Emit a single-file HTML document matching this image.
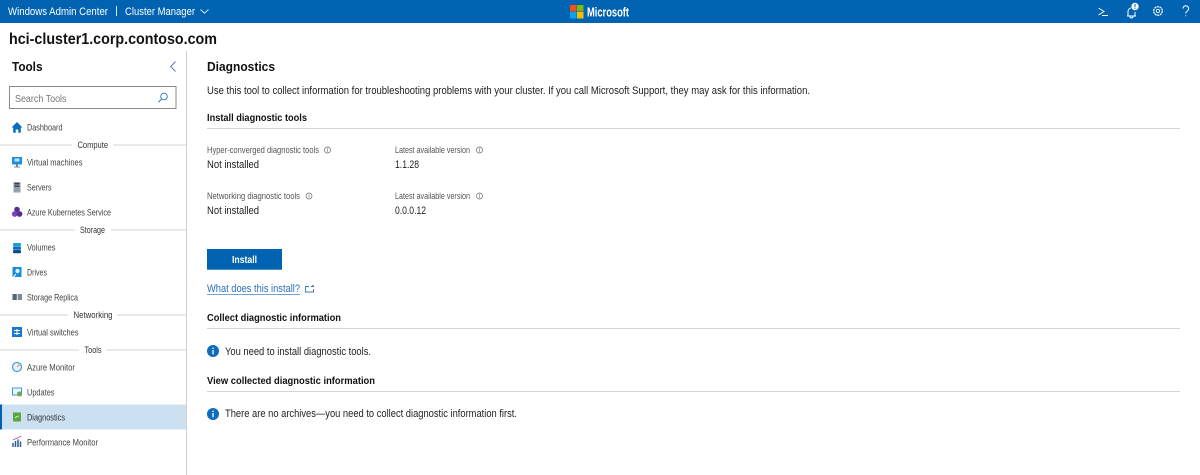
<!DOCTYPE html>
<html lang="en"><head><meta charset="utf-8"><title>Diagnostics</title>
<style>
html,body{margin:0;padding:0;background:#fff;width:1200px;height:475px;overflow:hidden}
svg{display:block}
text{font-family:"Liberation Sans",sans-serif;fill:#222;font-size:9.5px}
.n{fill:#444;font-size:9.5px}
.s{fill:#555;font-size:9.2px}
.h{font-weight:bold;font-size:10.5px;fill:#111}
.b{font-size:10.6px;fill:#222}
.w{fill:#fff;font-size:11px}
.g{fill:#333;font-size:9.2px}
</style></head><body>
<svg width="1200" height="475" viewBox="0 0 1200 475" xmlns="http://www.w3.org/2000/svg">
<rect width="1200" height="475" fill="#fff"/>
<!-- Header -->
<rect width="1200" height="23" fill="#0063b1"/>
<text class="w" x="8" y="15" textLength="100" lengthAdjust="spacingAndGlyphs">Windows Admin Center</text>
<rect x="116" y="6" width="1" height="10" fill="#dce9f5"/>
<text class="w" x="125" y="15" textLength="70" lengthAdjust="spacingAndGlyphs">Cluster Manager</text>
<path d="M200.500 9.500l4 3.700 4-3.700" fill="none" stroke="#dce9f5" stroke-width="1"/>
<rect x="570" y="5" width="6.500" height="6.500" fill="#f25022"/><rect x="577" y="5" width="6.500" height="6.500" fill="#7fba00"/>
<rect x="570" y="12" width="6.500" height="6.500" fill="#00a4ef"/><rect x="577" y="12" width="6.500" height="6.500" fill="#ffb900"/>
<text x="587" y="16.500" style="fill:#fff;font-size:13px;font-weight:bold" textLength="42" lengthAdjust="spacingAndGlyphs">Microsoft</text>
<path d="M1098.500 8l5.500 3.500-5.500 3.500M1102 15.500h6" fill="none" stroke="#fff" stroke-width="1"/>
<path d="M1128 16v-4.500a3.500 3.500 0 0 1 3-3.500M1135 12v4M1127 16h9M1130 16.500a1.500 1.500 0 0 0 3 0" fill="none" stroke="#fff" stroke-width="1"/>
<circle cx="1135" cy="6.500" r="3.700" fill="#fff"/><rect x="1134.500" y="4" width="1" height="3.200" fill="#0063b1"/><rect x="1134.500" y="7.800" width="1" height="1" fill="#0063b1"/>
<circle cx="1158" cy="11" r="4.300" fill="none" stroke="#fff" stroke-width="1.300" stroke-dasharray="2 .7"/><circle cx="1158" cy="11" r="1.700" fill="none" stroke="#fff" stroke-width=".9"/>
<path d="M1183 8.500a2.800 2.800 0 1 1 4.200 2.500c-1 .6-1.400 1-1.400 2.500" fill="none" stroke="#fff" stroke-width="1"/><rect x="1185.300" y="15.300" width="1" height="1" fill="#fff"/>
<!-- Title -->
<text x="9" y="44" style="font-size:15.500px;font-weight:bold;fill:#111" textLength="208" lengthAdjust="spacingAndGlyphs">hci-cluster1.corp.contoso.com</text>
<!-- Sidebar -->
<rect x="186" y="51" width="1" height="424" fill="#d0d0d0"/>
<text x="12" y="71" style="font-size:12.500px;font-weight:bold;fill:#111" textLength="30.500" lengthAdjust="spacingAndGlyphs">Tools</text>
<path d="M175.500 61.500l-4.800 5 4.800 5" fill="none" stroke="#5a76c0" stroke-width="1"/>
<rect x="9.500" y="86.500" width="166.500" height="22" fill="#fff" stroke="#8a8a8a"/>
<text x="15" y="102" style="font-size:10px;fill:#777" textLength="51.500" lengthAdjust="spacingAndGlyphs">Search Tools</text>
<circle cx="164" cy="96.500" r="3.300" fill="none" stroke="#3f7fc1" stroke-width="1"/><path d="M161.500 99l-3 3.200" stroke="#3f7fc1" stroke-width="1.100"/>
<path d="M11.500 127.500l5.500-5.500 5.500 5.500h-1.700v5.300h-2.500v-3.300h-2.600v3.300h-2.500v-5.300z" fill="#0f6cbd"/>
<text class="n" x="27" y="130.500" textLength="35.500" lengthAdjust="spacingAndGlyphs">Dashboard</text>
<rect x="0" y="144.500" width="72" height="1" fill="#d6d6d6"/><rect x="113" y="144.500" width="73" height="1" fill="#d6d6d6"/>
<text class="g" x="77.500" y="148" textLength="30.500" lengthAdjust="spacingAndGlyphs">Compute</text>
<rect x="12" y="157" width="10" height="7.500" fill="#1e8fe0"/><rect x="14.500" y="158.500" width="5" height="3" fill="#bfe3fa"/><rect x="16" y="164.500" width="2" height="2" fill="#7a8a99"/><rect x="14" y="166.500" width="6" height="1" fill="#7a8a99"/>
<text class="n" x="27" y="165.500" textLength="55.500" lengthAdjust="spacingAndGlyphs">Virtual machines</text>
<rect x="13.500" y="182" width="7" height="10.500" fill="#9a9fa5"/><rect x="14.500" y="183" width="5" height="1.400" fill="#28425e"/><rect x="14.500" y="185.500" width="5" height="1.400" fill="#28425e"/>
<text class="n" x="27" y="190.500" textLength="24.500" lengthAdjust="spacingAndGlyphs">Servers</text>
<circle cx="17" cy="209.500" r="2.800" fill="#5c2d91"/><circle cx="14.700" cy="214" r="2.900" fill="#7a45c0"/><circle cx="19.500" cy="214" r="2.900" fill="#5c2d91"/>
<text class="n" x="27" y="215.500" textLength="84" lengthAdjust="spacingAndGlyphs">Azure Kubernetes Service</text>
<rect x="0" y="229.500" width="75" height="1" fill="#d6d6d6"/><rect x="111" y="229.500" width="75" height="1" fill="#d6d6d6"/>
<text class="g" x="80" y="233" textLength="25" lengthAdjust="spacingAndGlyphs">Storage</text>
<rect x="13" y="243" width="8" height="3.200" rx="1" fill="#1b9de2"/><rect x="13" y="246.500" width="8" height="3.200" rx="1" fill="#0f6cbd"/><rect x="13" y="250" width="8" height="3.200" rx="1" fill="#0a4f8f"/>
<text class="n" x="27" y="250.500" textLength="28.500" lengthAdjust="spacingAndGlyphs">Volumes</text>
<rect x="12.500" y="267" width="9" height="10" fill="#1b8ad8"/><circle cx="17.500" cy="271" r="2.200" fill="#d6eefc"/><path d="M13.500 277l2.500-3" stroke="#fff" stroke-width="1"/>
<text class="n" x="27" y="275.500" textLength="20" lengthAdjust="spacingAndGlyphs">Drives</text>
<rect x="12.500" y="294" width="4.300" height="6" fill="#55657a"/><rect x="17.700" y="294" width="4.300" height="6" fill="#7d8a9a"/>
<text class="n" x="27" y="300.500" textLength="51" lengthAdjust="spacingAndGlyphs">Storage Replica</text>
<rect x="0" y="314.500" width="68" height="1" fill="#d6d6d6"/><rect x="117" y="314.500" width="69" height="1" fill="#d6d6d6"/>
<text class="g" x="73.500" y="318" textLength="39" lengthAdjust="spacingAndGlyphs">Networking</text>
<rect x="12" y="327" width="10" height="10" fill="#1a78d2"/><path d="M14 330.500h6M14 333.500h6M17 329v6" stroke="#fff" stroke-width="1" fill="none"/>
<text class="n" x="27" y="335.500" textLength="51.500" lengthAdjust="spacingAndGlyphs">Virtual switches</text>
<rect x="0" y="349.500" width="79" height="1" fill="#d6d6d6"/><rect x="106" y="349.500" width="80" height="1" fill="#d6d6d6"/>
<text class="g" x="84.500" y="353" textLength="17" lengthAdjust="spacingAndGlyphs">Tools</text>
<circle cx="17" cy="367" r="4.500" fill="#eaf5fc" stroke="#3c9ed8" stroke-width="1.200"/><path d="M17 367l2.500-2.500" stroke="#e57a3a" stroke-width="1"/>
<text class="n" x="27" y="370.500" textLength="48" lengthAdjust="spacingAndGlyphs">Azure Monitor</text>
<rect x="12.500" y="388" width="9" height="7" fill="#eaf5fc" stroke="#3c9ed8"/><circle cx="19.500" cy="394" r="2.500" fill="#6aa84f"/>
<text class="n" x="27" y="395.500" textLength="27.500" lengthAdjust="spacingAndGlyphs">Updates</text>
<rect x="0" y="404.500" width="186" height="25" fill="#cbe0f1"/><rect x="0" y="404.500" width="2" height="25" fill="#0063b1"/>
<rect x="13" y="412.500" width="8" height="9" fill="#5ca53c"/><path d="M15 418l2-1.500 2-.5" stroke="#e9f6df" stroke-width=".8" fill="none"/>
<text class="n" x="27" y="420.500" textLength="38" lengthAdjust="spacingAndGlyphs" style="fill:#333">Diagnostics</text>
<path d="M13 443v4M15.500 441v6M18 439.500v7.500M20.500 441.500v5.500" stroke="#315a9a" stroke-width="1.500"/><path d="M13 440l3-1.500 2.500-1 3-1.500" stroke="#a44fb0" stroke-width=".9" fill="none"/>
<text class="n" x="27" y="445.500" textLength="71" lengthAdjust="spacingAndGlyphs">Performance Monitor</text>
<!-- Main -->
<text x="207" y="71" style="font-size:12.500px;font-weight:bold;fill:#111" textLength="68" lengthAdjust="spacingAndGlyphs">Diagnostics</text>
<text class="b" x="207" y="94" textLength="603" lengthAdjust="spacingAndGlyphs">Use this tool to collect information for troubleshooting problems with your cluster. If you call Microsoft Support, they may ask for this information.</text>
<text class="h" x="207" y="121" textLength="100" lengthAdjust="spacingAndGlyphs">Install diagnostic tools</text>
<rect x="207" y="128" width="973" height="1" fill="#d4d4d4"/>
<text class="s" x="207" y="153" textLength="112" lengthAdjust="spacingAndGlyphs">Hyper-converged diagnostic tools</text>
<g fill="none" stroke="#666" stroke-width=".7"><circle cx="327.500" cy="150" r="3"/><circle cx="479.500" cy="150" r="3"/><circle cx="309" cy="196" r="3"/><circle cx="479.500" cy="196" r="3"/></g>
<g fill="#666"><rect x="327.200" y="149.300" width=".7" height="2.300"/><rect x="327.200" y="148.200" width=".7" height=".7"/><rect x="479.200" y="149.300" width=".7" height="2.300"/><rect x="479.200" y="148.200" width=".7" height=".7"/><rect x="308.700" y="195.300" width=".7" height="2.300"/><rect x="308.700" y="194.200" width=".7" height=".7"/><rect x="479.200" y="195.300" width=".7" height="2.300"/><rect x="479.200" y="194.200" width=".7" height=".7"/></g>
<text class="s" x="395" y="153" textLength="75" lengthAdjust="spacingAndGlyphs">Latest available version</text>
<text class="b" x="207" y="168" textLength="52" lengthAdjust="spacingAndGlyphs">Not installed</text>
<text class="b" x="395" y="168" textLength="24" lengthAdjust="spacingAndGlyphs">1.1.28</text>
<text class="s" x="207" y="199" textLength="93" lengthAdjust="spacingAndGlyphs">Networking diagnostic tools</text>
<text class="s" x="395" y="199" textLength="75" lengthAdjust="spacingAndGlyphs">Latest available version</text>
<text class="b" x="207" y="214" textLength="52" lengthAdjust="spacingAndGlyphs">Not installed</text>
<text class="b" x="395" y="214" textLength="31" lengthAdjust="spacingAndGlyphs">0.0.0.12</text>
<rect x="207" y="249" width="75" height="21" fill="#0063b1"/><rect x="207" y="269" width="75" height="1" fill="#4f8fc6"/>
<text x="232" y="263" style="fill:#fff;font-size:10.500px;font-weight:bold" textLength="25" lengthAdjust="spacingAndGlyphs">Install</text>
<text x="207" y="292" style="font-size:10.600px;fill:#2a70b8" textLength="93" lengthAdjust="spacingAndGlyphs">What does this install?</text>
<rect x="207" y="294" width="93" height="1" fill="#6fa3d4"/>
<path d="M309 286.500h-3.500v5.500h8v-3M311 286.500h3M313.500 285l-2 2" fill="none" stroke="#3a78b8" stroke-width=".9"/>
<text class="h" x="207" y="321" textLength="134" lengthAdjust="spacingAndGlyphs">Collect diagnostic information</text>
<rect x="207" y="328" width="973" height="1" fill="#d4d4d4"/>
<circle cx="213" cy="351" r="6" fill="#0f6cbd"/><rect x="212.400" y="350" width="1.300" height="4.300" fill="#fff"/><rect x="212.400" y="347.700" width="1.300" height="1.300" fill="#fff"/>
<text class="b" x="225" y="355" textLength="146" lengthAdjust="spacingAndGlyphs">You need to install diagnostic tools.</text>
<text class="h" x="207" y="384" textLength="168" lengthAdjust="spacingAndGlyphs">View collected diagnostic information</text>
<rect x="207" y="391" width="973" height="1" fill="#d4d4d4"/>
<circle cx="213" cy="414" r="6" fill="#0f6cbd"/><rect x="212.400" y="413" width="1.300" height="4.300" fill="#fff"/><rect x="212.400" y="410.700" width="1.300" height="1.300" fill="#fff"/>
<text class="b" x="225" y="417" textLength="292" lengthAdjust="spacingAndGlyphs">There are no archives—you need to collect diagnostic information first.</text>
</svg>
</body></html>
